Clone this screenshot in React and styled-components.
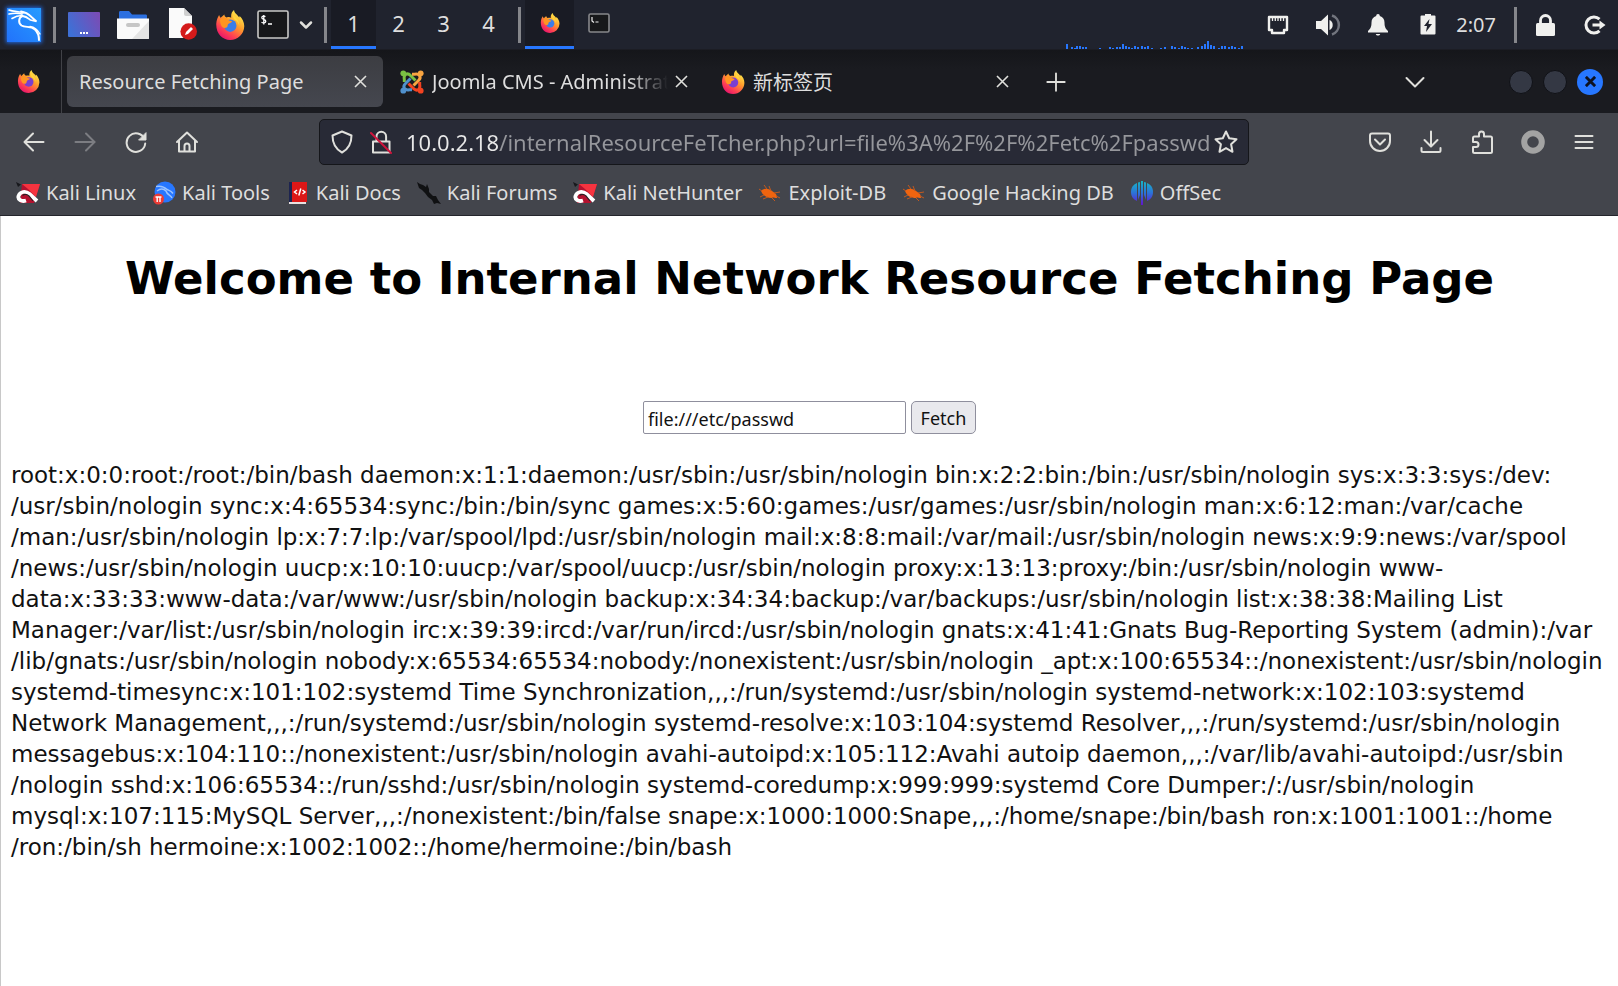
import React, { useState } from 'react';
import styled, { createGlobalStyle, css } from 'styled-components';

const uiFont = '"Noto Sans", "Noto Sans CJK SC", sans-serif';

const colors = {
  panel: '#20232e',
  panelDark: '#191b24',
  tabBar: '#1a1b20',
  toolbar: '#43454c',
  field: '#282a36',
  accent: '#2777ff',
  text: '#dedede',
  icon: '#e0e0dc',
  muted: '#96979c',
};

const GlobalStyle = createGlobalStyle`
  * {
    box-sizing: border-box;
  }
  body {
    margin: 0;
    background: #fff;
  }
  button, input {
    font-family: inherit;
    margin: 0;
  }
  svg {
    display: block;
    flex: none;
  }
`;

const Desktop = styled.div`
  display: flex;
  flex-direction: column;
  min-height: 100vh;
  font-family: ${uiFont};
  font-size: 20px;
  color: ${colors.text};
`;

/* desktop panel */

const Panel = styled.header`
  display: flex;
  align-items: center;
  height: 50px;
  padding: 0 12px 0 7px;
  background: ${colors.panel};
  border-bottom: 1px solid #1c1d24;
`;
const IconButton = styled.button`
  display: flex;
  align-items: center;
  justify-content: center;
  width: ${(props) => props.$width || 32}px;
  height: 36px;
  flex: none;
  padding: 0;
  border: 0;
  background: none;
  color: ${colors.icon};
`;
const KaliTile = styled(IconButton)`
  width: 34px;
  height: 34px;
  background: linear-gradient(45deg, #2272fb, #259cff);
  box-shadow: 0 0 4px 1px #2268e0;
  color: #fff;
`;
const Separator = styled.div`
  width: 3px;
  height: 36px;
  margin: 0 ${(props) => props.$right}px 0 ${(props) => props.$left}px;
  background: #85868b;
`;
const Launchers = styled.div`
  display: flex;
  align-items: center;
  gap: 17px;
`;
const TerminalLauncher = styled(IconButton)`
  margin-left: 12px;
  margin-right: 1px;
`;
const Workspace = styled.button`
  display: flex;
  align-items: center;
  justify-content: center;
  align-self: stretch;
  width: ${(props) => props.$width || 45}px;
  padding: 0;
  border: 0;
  border-bottom: 3px solid transparent;
  background: none;
  color: ${colors.text};
  font-size: 22px;
  ${(props) =>
    props.$active &&
    css`
      background: ${colors.panelDark};
      border-color: ${colors.accent};
    `}
`;
const Tray = styled.div`
  display: flex;
  align-items: center;
  align-self: stretch;
  margin-left: auto;
`;
const LoadGraph = styled.svg`
  align-self: flex-end;
  margin-right: 18px;
`;
const TrayIcons = styled.div`
  display: flex;
  gap: 18px;
`;
const Clock = styled.time`
  margin-left: 12px;
  line-height: 24px;
`;
const LogoutButton = styled(IconButton)`
  width: 22px;
  margin-left: 23px;
`;

/* browser chrome */

const TabBar = styled.div`
  display: flex;
  align-items: center;
  height: 63px;
  padding-right: 15px;
  background: linear-gradient(#15161a, ${colors.tabBar} 30%);
`;
const PinnedTab = styled.div`
  display: flex;
  align-items: center;
  align-self: stretch;
  width: 62px;
  padding-left: 17px;
  margin-right: 5px;
  border-right: 1px solid #414247;
`;
const Tab = styled.div`
  display: flex;
  align-items: center;
  flex: 0 1 316px;
  min-width: 0;
  height: 51px;
  margin-right: 5px;
  padding: 0 10px 0 12px;
  border-radius: 6px;
  background: ${(props) =>
    props.$active ? 'linear-gradient(#3c3d42, #45474f)' : 'none'};
`;
const TabTitle = styled.button`
  flex: 1;
  min-width: 0;
  padding: 0;
  border: 0;
  background: none;
  color: ${colors.text};
  font-size: 20px;
  text-align: left;
  white-space: nowrap;
  overflow: hidden;
  margin-left: ${(props) => (props.$hasIcon ? 8 : 0)}px;
  mask-image: ${(props) =>
    props.$fade
      ? 'linear-gradient(to left, transparent, #000 40px)'
      : 'none'};
`;
const NewTabButton = styled(IconButton)`
  margin-left: 8px;
`;
const TabListButton = styled(IconButton)`
  margin-right: 78px;
`;
const WindowButtons = styled.div`
  display: flex;
  align-items: center;
  gap: 10px;
`;
const WindowButton = styled.button`
  display: flex;
  align-items: center;
  justify-content: center;
  width: 24px;
  height: 24px;
  padding: 0;
  border: 1px solid #101116;
  border-radius: 50%;
  background: #343844;
  ${(props) =>
    props.$close &&
    css`
      width: 26px;
      height: 26px;
      border: 0;
      background: ${colors.accent};
    `}
`;
const Spacer = styled.div`
  flex: 1;
`;

const Toolbar = styled.div`
  display: flex;
  align-items: center;
  height: 57px;
  padding: 0 22px;
  background: ${colors.toolbar};
`;
const NavButtons = styled.div`
  display: flex;
  gap: 27px;
`;
const AddressBar = styled.div`
  display: flex;
  align-items: center;
  flex: 0 1 930px;
  height: 46px;
  margin: 0 auto 0 120px;
  padding: 0 10px;
  border: 1px solid #15161a;
  border-radius: 5px;
  background: ${colors.field};
`;
const InsecureButton = styled(IconButton)`
  margin-left: 15px;
`;
/* the host part is drawn brighter than the path */
const AddressInput = styled.input`
  flex: 1;
  min-width: 0;
  height: 40px;
  padding: 0;
  margin-left: 13px;
  border: 0;
  outline: 0;
  font-size: 22px;
  color: transparent;
  background: linear-gradient(to right, #e8e8e8 94px, ${colors.muted} 94px);
  background-clip: text;
  -webkit-background-clip: text;
`;
const Actions = styled.div`
  display: flex;
  flex: none;
  gap: 27px;
`;
const Bookmarks = styled.nav`
  display: flex;
  align-items: center;
  gap: 16px;
  height: 46px;
  padding: 0 16px;
  background: ${colors.toolbar};
  border-bottom: 1px solid #24252c;
`;
const Bookmark = styled.a`
  display: grid;
  grid-template-columns: 24px auto;
  align-items: center;
  justify-items: center;
  gap: 6px;
  color: ${colors.text};
  font-size: 20px;
  text-decoration: none;
  white-space: nowrap;
`;

/* page */

const Page = styled.main`
  flex: 1;
  padding: 0 10px;
  border-left: 1px solid #c8c8c8;
  background: #fff;
  color: #000;
  font-family: "DejaVu Sans", sans-serif;
`;
const Heading = styled.h1`
  margin: 36px 0 96px;
  font-size: 45px;
  line-height: 53px;
  text-align: center;
`;
const FetchForm = styled.form`
  display: flex;
  justify-content: center;
  gap: 5px;
  font-family: ${uiFont};
`;
const UrlInput = styled.input`
  width: 263px;
  height: 33px;
  padding: 2px 4px 0;
  border: 1px solid #8f8f9d;
  border-radius: 2px;
  background: #fff;
  color: #111;
  font-size: 18px;
`;
const FetchButton = styled.button`
  width: 65px;
  height: 33px;
  padding: 0;
  border: 1px solid #8f8f9d;
  border-radius: 5px;
  background: #e9e9ed;
  color: #111;
  font-size: 18px;
`;
const Result = styled.p`
  margin: 26px 0 0;
  font-size: 23px;
  line-height: 31px;
  white-space: pre;
  color: #111;
`;

function KaliDragon() {
  return (
    <svg width="34" height="34" viewBox="0 0 34 34" fill="none" stroke="currentColor" strokeLinecap="round">
      <path d="M2 2c5 2 10 1 15 3M2 6c5-1 9-1 13 0M5 10.500c3-2 6-3 10-3" strokeWidth="1.600" />
      <path d="M14 3.500c4 .5 8 3 10.500 5.500l5 4.500-6-1.500c-2-1.500-4-3.500-8-4" strokeWidth="1.800" />
      <path d="M15.500 8c-4 1.500-4.500 7-1 9.500 4 2.500 9 0 13.500 4 2.500 2.500 4 6 4 10.500" strokeWidth="2" />
      <path d="M23 18.500c4 .5 7.500 3 10 7.500" strokeWidth="1.400" />
    </svg>
  );
}

function FirefoxIcon({ size, id, core = '#3b7de8' }) {
  return (
    <svg width={size} height={size} viewBox="0 0 24 24">
      <defs>
        <linearGradient id={id} x1="0.85" y1="0.1" x2="0.25" y2="1">
          <stop offset="0" stopColor="#fff04d" />
          <stop offset="0.4" stopColor="#ff9a2b" />
          <stop offset="0.72" stopColor="#ff4252" />
          <stop offset="1" stopColor="#e5106e" />
        </linearGradient>
      </defs>
      <path
        d="M1 11c.2-3 1-5 2.300-7 .3 1 .6 1.600 1.200 2.200L7.500 3.500c.1 1.400.7 2 1.900 2.500 1.200-.5 2.400-.4 3.600.1C12.600 3.500 13.500 1.300 15.200 0c.3 2 1.300 2.800 2.900 4.300l1.300 1.700.3-1.300c2.200 2 3.800 5.200 3.700 8.300A11.300 11.300 0 0 1 12.100 24C5.800 24 .7 18.900 1 11z"
        fill={`url(#${id})`}
      />
      <circle cx="12.200" cy="12.500" r="5" fill={core} />
      <path d="M4 8c2-2.300 5-1.700 6.500-.3 1 .9 2.300 1 3.200 1.200-.3 1.300-2.500 1.600-3.300 2.400-.5.8 0 2-1.100 2.700-2.800 1.300-5-.8-5.300-6z" fill="#ff9522" />
      <path d="M14.500 3.500c2 2.500 4.800 4.600 4.900 9-.5-2-1.600-3.800-3.600-4.800-1-.9-1.600-2.500-1.300-4.200z" fill="#ffd83a" />
    </svg>
  );
}

function DesktopIcon() {
  return (
    <svg width="32" height="26" viewBox="0 0 32 26">
      <defs>
        <linearGradient id="desk" x1="0" y1="0.6" x2="1" y2="0.2">
          <stop offset="0" stopColor="#3e70d6" />
          <stop offset="1" stopColor="#7a4cb5" />
        </linearGradient>
      </defs>
      <rect width="32" height="25" rx="1" fill="url(#desk)" />
      <path d="M12 21h2M15 21h2M18 21h2" stroke="#fff" strokeWidth="2" />
    </svg>
  );
}

function FolderIcon() {
  return (
    <svg width="32" height="30" viewBox="0 0 32 30">
      <path d="M2 10V2.500C2 1.500 2.500 1 3.500 1H12l3 3.500h13.500c1 0 1.500.5 1.500 1.500v4z" fill="#2b6fe0" />
      <path d="M0 8.500h32V28q0 1-1 1H1q-1 0-1-1z" fill="#fafafa" />
      <path d="M32 11v17q0 1-1 1H15z" fill="#e4e4e4" />
      <rect x="9" y="13" width="14" height="4" rx="2" fill="#c6c6c6" />
    </svg>
  );
}

function EditorIcon() {
  return (
    <svg width="30" height="33" viewBox="0 0 30 33">
      <path d="M2 0h15l8 8v22H2z" fill="#fafafa" />
      <path d="M17 0l8 8h-6q-2 0-2-2z" fill="#cfcfcf" />
      <circle cx="21.700" cy="23.500" r="8.300" fill="#d41a1a" />
      <path d="M18 27l1-3 5-5 2 2-5 5z" fill="#fff" />
    </svg>
  );
}

function TerminalIcon({ small }) {
  return small ? (
    <svg width="22" height="20" viewBox="0 0 22 20">
      <rect x="1" y="1" width="20" height="18" rx="1.500" fill="#17181a" stroke="#87888b" strokeWidth="1.600" />
      <path d="M4 4v4l2 1.500M7.500 9h3" stroke="#eee" fill="none" strokeWidth="1.200" />
    </svg>
  ) : (
    <svg width="32" height="29" viewBox="0 0 32 29">
      <rect x="1" y="1" width="30" height="27" rx="1.500" fill="#17181a" stroke="#c9c9c6" strokeWidth="1.600" />
      <path d="M8.500 6.500C7 5.800 4.800 6 4.800 7.800S8.800 9.300 8.800 11.300 6 13.300 4.500 12.300M6.800 5v9.500M11 14h4" stroke="#fff" fill="none" strokeWidth="1.300" />
    </svg>
  );
}

function JoomlaIcon() {
  const arms = [
    ['#7ac143', 0],
    ['#f9a541', 90],
    ['#f44321', 180],
    ['#5091cd', 270],
  ];
  return (
    <svg width="24" height="24" viewBox="0 0 24 24">
      {arms.map(([color, angle]) => (
        <g key={color} transform={`rotate(${angle} 12 12)`}>
          <circle cx="3.300" cy="3.300" r="2.900" fill={color} />
          <path d="M4.300 12V9.500C3.800 7 4.200 5.500 5.500 4.500c1.500-1 3.500-.6 5 1L15.500 10.500" stroke={color} strokeWidth="3" fill="none" />
        </g>
      ))}
    </svg>
  );
}

function CloseIcon({ color = 'currentColor', width = 2, size = 13 }) {
  return (
    <svg width={size} height={size} viewBox="0 0 13 13" fill="none">
      <path d="M1 1l11 11M12 1L1 12" stroke={color} strokeWidth={width} />
    </svg>
  );
}

function LineIcon({ children, size = 24, strokeWidth = 2 }) {
  return (
    <svg
      width={size}
      height={size}
      viewBox="0 0 24 24"
      fill="none"
      stroke="currentColor"
      strokeWidth={strokeWidth}
      strokeLinecap="round"
      strokeLinejoin="round"
    >
      {children}
    </svg>
  );
}

function KaliRedIcon() {
  return (
    <svg width="24" height="22" viewBox="0 0 24 22">
      <path d="M6 2h18l-4 12-2 7H4z" fill="#b3122f" />
      <path d="M6 2h18l-4 13-8-8z" fill="#f5333f" />
      <path d="M0 0l5 2.500L2 5z" fill="#17181c" />
      <path d="M10 18.500c-4.500 1.500-8.500-1-7.500-4.500C4 9.500 9.500 8.500 13.500 12l7.500 7" stroke="#fff" strokeWidth="3.800" fill="none" />
      <path d="M6.500 13.500c2-1.500 4.500-1.300 6.500.5l4 5" stroke="#2c2024" strokeWidth="1.200" fill="none" />
    </svg>
  );
}

function KaliToolsIcon() {
  return (
    <svg width="23" height="24" viewBox="0 0 23 24">
      <circle cx="12" cy="11" r="10.500" fill="#2777ff" />
      <path d="M3 5.500c5-1 8 0 11 3 2 1 4 1 6 4M4 10c4-3 7-2 9 0 1 4 5 4 6 7" stroke="#9cc4ff" strokeWidth="1.500" fill="none" />
      <circle cx="5.500" cy="18" r="5.500" fill="#ec3b34" />
      <path d="M2.500 16h6M4.200 16v5M7 16v5" stroke="#fff" strokeWidth="1.400" />
    </svg>
  );
}

function KaliDocsIcon() {
  return (
    <svg width="20" height="24" viewBox="0 0 20 24">
      <path d="M1 1h4v20H1z" fill="#1d2450" />
      <path d="M4 1h15v20H4z" fill="#dd1717" />
      <path d="M1 22h17" stroke="#e8e0e0" strokeWidth="2" />
      <path d="M9 9l-2.500 2L9 13M14.500 9l2.500 2-2.500 2M12.800 7.500l-2 7" stroke="#fff" strokeWidth="1.500" fill="none" />
    </svg>
  );
}

function KaliForumsIcon() {
  return (
    <svg width="24" height="24" viewBox="0 0 24 24">
      <path d="M0 1l3 2 3 1 3 2 1-3 2 5v3l4 4h3l2 4 3 4-4-1-3 1-2-4-4-3-3-4-3-3-3-2-1-3z" fill="#101113" />
    </svg>
  );
}

function BugIcon() {
  return (
    <svg width="22" height="20" viewBox="0 0 22 20">
      <path d="M2 8c3-3 7-3 11 0 3 2 5 3 5 7-3 0-4-1-5 0-5 0-9-2-11-7z" fill="#f0640f" />
      <path d="M8 6L5 2M12 8l-2-5M15 10l6-1M17 13l4 2M5 12l-4 2M9 14l-5 2M13 15l3 3M3 8L0 6" stroke="#c2591f" strokeWidth="1" />
    </svg>
  );
}

function OffSecIcon() {
  return (
    <svg width="22" height="24" viewBox="0 0 22 24">
      <defs>
        <linearGradient id="offsec" gradientUnits="userSpaceOnUse" x1="0" y1="0" x2="0" y2="24">
          <stop offset="0" stopColor="#16b6c4" />
          <stop offset="0.5" stopColor="#2c72d8" />
          <stop offset="1" stopColor="#6412d0" />
        </linearGradient>
      </defs>
      <g fill="url(#offsec)">
        <path d="M6 2v18C2 18.500 0 15 0 11s2-7.500 6-9z" />
        <path d="M7 1.500L9 1v13L7 19z" />
        <path d="M10 0h2v24h-2z" />
        <path d="M13 1l2 .5V19l-2-5z" />
        <path d="M16 2c4 1.500 6 5 6 9s-2 7.500-6 9z" />
      </g>
    </svg>
  );
}

const loadBars = [
  [0, 5], [5, 2], [8, 1], [10, 3], [13, 3], [16, 2], [19, 2], [33, 1], [43, 2], [46, 1],
  [50, 2], [53, 2], [56, 5], [59, 3], [62, 2], [65, 1], [68, 3], [71, 2], [75, 3], [78, 2],
  [81, 3], [85, 1], [94, 1], [98, 2], [105, 3], [108, 2], [112, 1], [115, 3], [118, 2],
  [121, 1], [125, 1], [131, 2], [135, 3], [138, 5], [141, 8], [144, 4], [147, 3], [152, 1],
  [155, 3], [158, 3], [162, 2], [165, 3], [168, 2], [172, 1], [175, 3],
];

const bookmarks = [
  { label: 'Kali Linux', Icon: KaliRedIcon },
  { label: 'Kali Tools', Icon: KaliToolsIcon },
  { label: 'Kali Docs', Icon: KaliDocsIcon },
  { label: 'Kali Forums', Icon: KaliForumsIcon },
  { label: 'Kali NetHunter', Icon: KaliRedIcon },
  { label: 'Exploit-DB', Icon: BugIcon },
  { label: 'Google Hacking DB', Icon: BugIcon },
  { label: 'OffSec', Icon: OffSecIcon },
];

const passwd = `root:x:0:0:root:/root:/bin/bash daemon:x:1:1:daemon:/usr/sbin:/usr/sbin/nologin bin:x:2:2:bin:/bin:/usr/sbin/nologin sys:x:3:3:sys:/dev:
/usr/sbin/nologin sync:x:4:65534:sync:/bin:/bin/sync games:x:5:60:games:/usr/games:/usr/sbin/nologin man:x:6:12:man:/var/cache
/man:/usr/sbin/nologin lp:x:7:7:lp:/var/spool/lpd:/usr/sbin/nologin mail:x:8:8:mail:/var/mail:/usr/sbin/nologin news:x:9:9:news:/var/spool
/news:/usr/sbin/nologin uucp:x:10:10:uucp:/var/spool/uucp:/usr/sbin/nologin proxy:x:13:13:proxy:/bin:/usr/sbin/nologin www-
data:x:33:33:www-data:/var/www:/usr/sbin/nologin backup:x:34:34:backup:/var/backups:/usr/sbin/nologin list:x:38:38:Mailing List
Manager:/var/list:/usr/sbin/nologin irc:x:39:39:ircd:/var/run/ircd:/usr/sbin/nologin gnats:x:41:41:Gnats Bug-Reporting System (admin):/var
/lib/gnats:/usr/sbin/nologin nobody:x:65534:65534:nobody:/nonexistent:/usr/sbin/nologin _apt:x:100:65534::/nonexistent:/usr/sbin/nologin
systemd-timesync:x:101:102:systemd Time Synchronization,,,:/run/systemd:/usr/sbin/nologin systemd-network:x:102:103:systemd
Network Management,,,:/run/systemd:/usr/sbin/nologin systemd-resolve:x:103:104:systemd Resolver,,,:/run/systemd:/usr/sbin/nologin
messagebus:x:104:110::/nonexistent:/usr/sbin/nologin avahi-autoipd:x:105:112:Avahi autoip daemon,,,:/var/lib/avahi-autoipd:/usr/sbin
/nologin sshd:x:106:65534::/run/sshd:/usr/sbin/nologin systemd-coredump:x:999:999:systemd Core Dumper:/:/usr/sbin/nologin
mysql:x:107:115:MySQL Server,,,:/nonexistent:/bin/false snape:x:1000:1000:Snape,,,:/home/snape:/bin/bash ron:x:1001:1001::/home
/ron:/bin/sh hermoine:x:1002:1002::/home/hermoine:/bin/bash`;

function DesktopPanel() {
  const [workspace, setWorkspace] = useState(1);

  return (
    <Panel>
      <KaliTile aria-label="Applications">
        <KaliDragon />
      </KaliTile>
      <Separator $left={12} $right={12} />
      <Launchers>
        <IconButton aria-label="Show desktop"><DesktopIcon /></IconButton>
        <IconButton aria-label="Files"><FolderIcon /></IconButton>
        <IconButton aria-label="Text editor"><EditorIcon /></IconButton>
        <IconButton aria-label="Firefox" $width={30}>
          <FirefoxIcon size={30} id="ff-launch" />
        </IconButton>
      </Launchers>
      <TerminalLauncher aria-label="Terminal"><TerminalIcon /></TerminalLauncher>
      <IconButton aria-label="More terminals">
        <LineIcon size={20} strokeWidth={3}><path d="M6 9l6 6 6-6" /></LineIcon>
      </IconButton>
      <Separator $left={2} $right={4} />
      {[1, 2, 3, 4].map((n) => (
        <Workspace key={n} $active={workspace === n} onClick={() => setWorkspace(n)}>
          {n}
        </Workspace>
      ))}
      <Separator $left={7} $right={4} />
      <Workspace $width={49} $active aria-label="Firefox window">
        <FirefoxIcon size={20} id="ff-task" />
      </Workspace>
      <Workspace $width={49} aria-label="Terminal window">
        <TerminalIcon small />
      </Workspace>
      <Tray>
        <LoadGraph width="178" height="9" viewBox="0 0 178 9">
          {loadBars.map(([x, h]) => (
            <rect key={x} x={x} y={9 - h} width="2" height={h} fill={colors.accent} />
          ))}
        </LoadGraph>
      </Tray>
      <TrayIcons>
        <IconButton aria-label="Network">
          <svg width="22" height="20" viewBox="0 0 22 20" fill="none" stroke="#f0f0ee">
            <path d="M2 2h18v13h-3v3H5v-3H2z" strokeWidth="2.400" strokeLinejoin="round" />
            <path d="M5.500 3v3M8.300 3v3M11 3v3M13.700 3v3M16.500 3v3" strokeWidth="1.300" />
          </svg>
        </IconButton>
        <IconButton aria-label="Volume">
          <svg width="25" height="22" viewBox="0 0 25 22">
            <path d="M0 7h5l7-6.500v21L5 15H0z" fill="#f0f0ee" />
            <path d="M13.500 6a5.500 5.500 0 0 1 0 10z" fill="#f0f0ee" />
            <path d="M16 1.500a10 10 0 0 1 0 19" stroke="#72757e" strokeWidth="2.500" fill="none" />
          </svg>
        </IconButton>
        <IconButton aria-label="Notifications">
          <svg width="20" height="22" viewBox="0 0 20 22" fill="#f0f0ee">
            <path d="M10 0c1.200 0 1.800.8 1.800 1.900 3.200.9 4.700 3.400 4.700 6.600 0 5 1.500 6.500 3.500 8.500v1.500H0V17c2-2 3.500-3.500 3.500-8.500 0-3.200 1.500-5.700 4.700-6.600C8.200.8 8.800 0 10 0zM7.800 20h4.400c-.5 2-3.900 2-4.400 0z" />
          </svg>
        </IconButton>
        <IconButton aria-label="Battery">
          <svg width="16" height="21" viewBox="0 0 16 21">
            <path d="M5 0h6v1.500h3.500q1 0 1 1v17q0 1-1 1h-13q-1 0-1-1v-17q0-1 1-1H5z" fill="#f0f0ee" />
            <path d="M9.500 5L4 12h3l-1 6 6-8H8.500z" fill={colors.panel} />
          </svg>
        </IconButton>
      </TrayIcons>
      <Clock>2:07</Clock>
      <Separator $left={18} $right={12} />
      <IconButton aria-label="Lock screen">
        <svg width="19" height="22" viewBox="0 0 19 22">
          <rect y="9" width="19" height="13" rx="1.500" fill="#f0f0ee" />
          <path d="M4.500 11V6.500a5 5 0 0 1 10 0V11" stroke="#f0f0ee" strokeWidth="2.800" fill="none" />
        </svg>
      </IconButton>
      <LogoutButton aria-label="Log out">
        <svg width="22" height="20" viewBox="0 0 22 20" fill="none" stroke="#f0f0ee">
          <path d="M15.500 4.200A8 8 0 1 0 15.500 15.800" strokeWidth="3" />
          <path d="M8.500 10h8" strokeWidth="3" />
          <path d="M15.500 5.500L21.500 10l-6 4.500z" fill="#f0f0ee" stroke="none" />
        </svg>
      </LogoutButton>
    </Panel>
  );
}

function BrowserTab({ title, icon, active, fade }) {
  return (
    <Tab $active={active}>
      {icon}
      <TabTitle $hasIcon={!!icon} $fade={fade}>{title}</TabTitle>
      <IconButton $width={26} aria-label={`Close ${title}`}>
        <CloseIcon width={1.6} />
      </IconButton>
    </Tab>
  );
}

function BrowserToolbar() {
  const [address, setAddress] = useState(
    '10.0.2.18/internalResourceFeTcher.php?url=file%3A%2F%2F%2Fetc%2Fpasswd'
  );

  return (
    <Toolbar>
      <NavButtons>
        <IconButton $width={24} aria-label="Back">
          <LineIcon><path d="M21.500 12H3M11 3.500L2.500 12l8.500 8.500" /></LineIcon>
        </IconButton>
        <IconButton $width={24} aria-label="Forward" disabled>
          <svg width="24" height="24" viewBox="0 0 24 24" fill="none" stroke="#7c7d82" strokeWidth="2" strokeLinecap="round">
            <path d="M2.500 12H21M13 3.500l8.500 8.500-8.500 8.500" />
          </svg>
        </IconButton>
        <IconButton $width={24} aria-label="Reload">
          <LineIcon>
            <path d="M20.500 9A9.300 9.300 0 1 0 21.200 13.500" />
            <path d="M22 3v7h-7z" fill="currentColor" strokeWidth="1" />
          </LineIcon>
        </IconButton>
        <IconButton $width={24} aria-label="Home">
          <LineIcon>
            <path d="M2 12L12 2.500 22 12M4 10.500V21.500h16V10.500M9.500 21v-5a2.500 2.500 0 0 1 5 0v5" />
          </LineIcon>
        </IconButton>
      </NavButtons>
      <AddressBar>
        <IconButton $width={24} aria-label="Tracking protection">
          <LineIcon><path d="M12 1.500l9.500 4c0 8-3 13.500-9.500 17-6.500-3.500-9.500-9-9.500-17z" /></LineIcon>
        </IconButton>
        <InsecureButton $width={24} aria-label="Connection not secure">
          <LineIcon>
            <path d="M4 11.500h16.500v11H4zM7.500 11V6.500a4.800 4.800 0 0 1 9.600 0V11" />
            <path d="M2 3l20 20" stroke="#d0143c" />
          </LineIcon>
        </InsecureButton>
        <AddressInput
          aria-label="Address"
          spellCheck={false}
          value={address}
          onChange={(e) => setAddress(e.target.value)}
        />
        <IconButton $width={24} aria-label="Bookmark this page">
          <LineIcon>
            <path d="M12 1.500l3.200 6.800 7.300.9-5.400 5.100 1.400 7.500-6.500-3.700-6.500 3.700 1.400-7.500L1.500 9.200l7.300-.9z" />
          </LineIcon>
        </IconButton>
      </AddressBar>
      <Actions>
        <IconButton $width={24} aria-label="Save to Pocket">
          <LineIcon>
            <path d="M4 3.500h16q2 0 2 2V11a10 10 0 0 1-20 0V5.500q0-2 2-2zM7 9.500l5 5 5-5" />
          </LineIcon>
        </IconButton>
        <IconButton $width={24} aria-label="Downloads">
          <LineIcon>
            <path d="M12 1.500V16M5.500 10l6.500 6.500 6.500-6.500M2.500 18v2.500q0 1.500 1.500 1.500h16q1.500 0 1.500-1.500V18" />
          </LineIcon>
        </IconButton>
        <IconButton $width={24} aria-label="Extensions">
          <LineIcon>
            <path d="M3 8q0-1.500 1.500-1.500H9V4a2.500 2.500 0 0 1 5 0v2.500h6.500Q22 6.500 22 8v13.500q0 1.500-1.500 1.500h-16Q3 23 3 21.500V17h3a2.500 2.500 0 0 0 0-5H3z" />
          </LineIcon>
        </IconButton>
        <IconButton $width={24} aria-label="Extension">
          <svg width="24" height="24" viewBox="0 0 24 24">
            <circle cx="12" cy="12" r="8.800" fill="none" stroke="#a3a3a3" strokeWidth="6" />
          </svg>
        </IconButton>
        <IconButton $width={24} aria-label="Menu">
          <LineIcon><path d="M3.500 6h17M3.500 12h17M3.500 18h17" /></LineIcon>
        </IconButton>
      </Actions>
    </Toolbar>
  );
}

function FetchPage() {
  const [url, setUrl] = useState('file:///etc/passwd');

  return (
    <Page>
      <Heading>Welcome to Internal Network Resource Fetching Page</Heading>
      <FetchForm onSubmit={(e) => e.preventDefault()}>
        <UrlInput
          aria-label="Resource URL"
          value={url}
          onChange={(e) => setUrl(e.target.value)}
        />
        <FetchButton type="submit">Fetch</FetchButton>
      </FetchForm>
      <Result>{passwd}</Result>
    </Page>
  );
}

function App() {
  return (
    <Desktop>
      <GlobalStyle />
      <DesktopPanel />
      <TabBar>
        <PinnedTab>
          <FirefoxIcon size={23} id="ff-view" core="#7a3fd0" />
        </PinnedTab>
        <BrowserTab title="Resource Fetching Page" active />
        <BrowserTab title="Joomla CMS - Administrat" icon={<JoomlaIcon />} fade />
        <BrowserTab title="新标签页" icon={<FirefoxIcon size={24} id="ff-tab" core="#7a3fd0" />} />
        <NewTabButton aria-label="New tab" $width={36}>
          <LineIcon size={22}><path d="M12 2.500v19M2.500 12h19" /></LineIcon>
        </NewTabButton>
        <Spacer />
        <TabListButton aria-label="List all tabs">
          <LineIcon><path d="M3.500 8l8.500 8.500L20.500 8" /></LineIcon>
        </TabListButton>
        <WindowButtons>
          <WindowButton aria-label="Minimize" />
          <WindowButton aria-label="Maximize" />
          <WindowButton aria-label="Close window" $close>
            <CloseIcon color="#0d1220" width={3.4} size={11} />
          </WindowButton>
        </WindowButtons>
      </TabBar>
      <BrowserToolbar />
      <Bookmarks>
        {bookmarks.map(({ label, Icon }) => (
          <Bookmark key={label} href="#">
            <Icon />
            {label}
          </Bookmark>
        ))}
      </Bookmarks>
      <FetchPage />
    </Desktop>
  );
}

export default App;
